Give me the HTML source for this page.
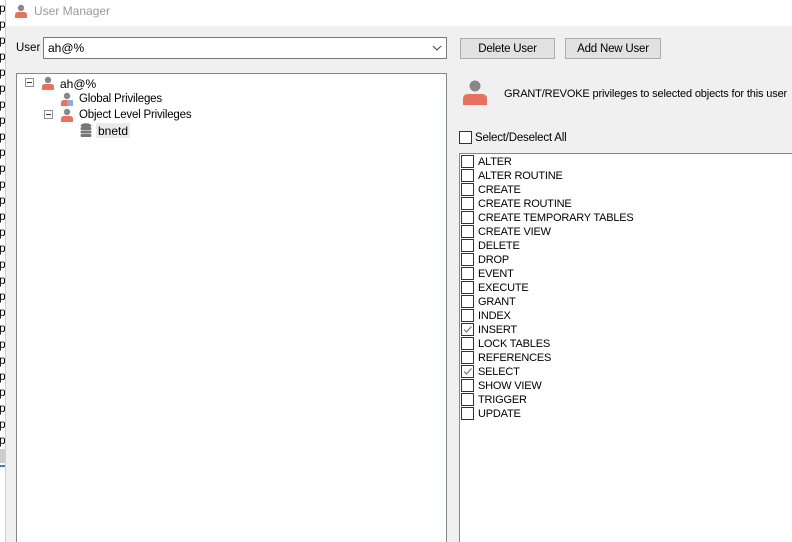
<!DOCTYPE html>
<html style="overflow:hidden;width:792px;height:542px"><head><style>
*{margin:0;padding:0;box-sizing:border-box}
body{width:792px;height:542px;overflow:hidden;background:#fff;font-family:"Liberation Sans",sans-serif;font-size:11px;color:#000;position:relative}
.a{position:absolute}
.cb{position:absolute;left:461px;width:13px;height:13px;border:1px solid #333;background:#fff}
.lb{position:absolute;left:478px;font-size:11px;line-height:14px;letter-spacing:-0.2px}
.btn{position:absolute;top:38px;height:21px;background:#e1e1e1;border:1px solid #adadad;text-align:center;line-height:21px;font-size:11.5px;letter-spacing:-0.2px}
</style></head><body>
<div class="a" style="left:0;top:0;width:6px;height:542px;background:#fff;overflow:hidden">
<div style="font-size:12px;line-height:16px;margin-left:-1px">p<br>p<br>p<br>p<br>p<br>p<br>p<br>p<br>p<br>p<br>p<br>p<br>p<br>p<br>p<br>p<br>p<br>p<br>p<br>p<br>p<br>p<br>p<br>p<br>p<br>p<br>p<br>p</div>
<div style="position:absolute;top:449px;left:0;width:6px;height:14px;background:#ccc"></div>
<div style="position:absolute;top:465px;left:0;width:6px;height:2px;background:#3c7fc6"></div>
</div>
<div class="a" style="left:5px;top:0;width:1px;height:542px;background:#d0d0d0"></div>
<div class="a" style="left:6px;top:0;width:786px;height:26px;background:#fff"></div>
<svg class="a" style="left:14px;top:4px" width="14" height="14" viewBox="0 0 14 14"><circle cx="7" cy="4" r="3.2" fill="#888"/><path d="M1 14 V11 Q1 8 4 8 H10 Q13 8 13 11 V14Z" fill="#e8705f"/></svg>
<div class="a" style="left:34px;top:4px;font-size:12px;color:#999">User Manager</div>
<div class="a" style="left:6px;top:26px;width:786px;height:516px;background:#f0f0f0"></div>
<div class="a" style="left:16px;top:42px;font-size:11.5px">User</div>
<div class="a" style="left:43px;top:37px;width:404px;height:22px;background:#fff;border:1px solid #7a7a7a;padding-left:4px;line-height:20px;font-size:12px">ah@%</div>
<svg class="a" style="left:432px;top:45px" width="10" height="6"><path d="M1 1 L5 5 L9 1" fill="none" stroke="#444"/></svg>
<div class="btn" style="left:460px;width:95px">Delete User</div>
<div class="btn" style="left:565px;width:96px">Add New User</div>
<div class="a" style="left:16px;top:73px;width:431px;height:469px;background:#fff;border:1px solid #828790;border-bottom:none"></div>
<div class="a" style="left:25px;top:78px;width:9px;height:9px;border:1px solid #919191;background:#fff"><div style="position:absolute;left:1px;top:3px;width:5px;height:1px;background:#333"></div></div>
<svg class="a" style="left:41px;top:76px" width="14" height="14" viewBox="0 0 14 14"><circle cx="7" cy="4" r="3.2" fill="#888"/><path d="M1 14 V11 Q1 8 4 8 H10 Q13 8 13 11 V14Z" fill="#e8705f"/></svg>
<div class="a" style="left:60px;top:77px;font-size:12px">ah@%</div>
<svg class="a" style="left:60px;top:92px" width="14" height="14" viewBox="0 0 14 14"><circle cx="7" cy="4" r="3.2" fill="#888"/><path d="M1 14 V11 Q1 8 4 8 H10 Q13 8 13 11 V14Z" fill="#e8705f"/><rect x="7" y="8" width="6" height="6" fill="#98a8d8"/></svg>
<div class="a" style="left:79px;top:93px;font-size:11.5px;letter-spacing:-0.2px">Global Privileges</div>
<div class="a" style="left:44px;top:110px;width:9px;height:9px;border:1px solid #919191;background:#fff"><div style="position:absolute;left:1px;top:3px;width:5px;height:1px;background:#333"></div></div>
<svg class="a" style="left:60px;top:108px" width="14" height="14" viewBox="0 0 14 14"><circle cx="7" cy="4" r="3.2" fill="#888"/><path d="M1 14 V11 Q1 8 4 8 H10 Q13 8 13 11 V14Z" fill="#e8705f"/></svg>
<div class="a" style="left:79px;top:109px;font-size:11.5px;letter-spacing:-0.2px">Object Level Privileges</div>
<svg class="a" style="left:80px;top:123px" width="12" height="14" viewBox="0 0 12 14"><ellipse cx="6" cy="2.5" rx="5.5" ry="2.2" fill="#777"/><rect x="0.5" y="4" width="11" height="3" rx="1.5" fill="#777"/><rect x="0.5" y="7.5" width="11" height="3" rx="1.5" fill="#777"/><rect x="0.5" y="11" width="11" height="3" rx="1.5" fill="#777"/></svg>
<div class="a" style="left:96px;top:123px;width:34px;height:15px;background:#eaeaea"></div>
<div class="a" style="left:98px;top:124px;font-size:12px">bnetd</div>
<svg class="a" style="left:462px;top:79px" width="26" height="26" viewBox="0 0 26 26"><circle cx="13" cy="7" r="5.5" fill="#888"/><path d="M1 26 V20 Q1 15 6 15 H20 Q25 15 25 20 V26Z" fill="#e8705f"/></svg>
<div class="a" style="left:504px;top:88px;font-size:11px;white-space:nowrap;letter-spacing:-0.15px">GRANT/REVOKE privileges to selected objects for this user</div>
<div class="cb" style="left:459px;top:131px"></div>
<div class="a" style="left:475px;top:132px;font-size:11.5px;letter-spacing:-0.2px">Select/Deselect All</div>
<div class="a" style="left:459px;top:153px;width:333px;height:389px;background:#fff;border-left:1px solid #828790;border-top:1px solid #828790"></div>
<div class="cb" style="top:155px"></div><div class="lb" style="top:155px">ALTER</div>
<div class="cb" style="top:169px"></div><div class="lb" style="top:169px">ALTER ROUTINE</div>
<div class="cb" style="top:183px"></div><div class="lb" style="top:183px">CREATE</div>
<div class="cb" style="top:197px"></div><div class="lb" style="top:197px">CREATE ROUTINE</div>
<div class="cb" style="top:211px"></div><div class="lb" style="top:211px">CREATE TEMPORARY TABLES</div>
<div class="cb" style="top:225px"></div><div class="lb" style="top:225px">CREATE VIEW</div>
<div class="cb" style="top:239px"></div><div class="lb" style="top:239px">DELETE</div>
<div class="cb" style="top:253px"></div><div class="lb" style="top:253px">DROP</div>
<div class="cb" style="top:267px"></div><div class="lb" style="top:267px">EVENT</div>
<div class="cb" style="top:281px"></div><div class="lb" style="top:281px">EXECUTE</div>
<div class="cb" style="top:295px"></div><div class="lb" style="top:295px">GRANT</div>
<div class="cb" style="top:309px"></div><div class="lb" style="top:309px">INDEX</div>
<div class="cb" style="top:323px"><svg width="11" height="11" style="position:absolute;left:0;top:0"><path d="M2 5.5 L4.5 8 L9.5 2.5" fill="none" stroke="#777" stroke-width="1.2"/></svg></div><div class="lb" style="top:323px">INSERT</div>
<div class="cb" style="top:337px"></div><div class="lb" style="top:337px">LOCK TABLES</div>
<div class="cb" style="top:351px"></div><div class="lb" style="top:351px">REFERENCES</div>
<div class="cb" style="top:365px"><svg width="11" height="11" style="position:absolute;left:0;top:0"><path d="M2 5.5 L4.5 8 L9.5 2.5" fill="none" stroke="#777" stroke-width="1.2"/></svg></div><div class="lb" style="top:365px">SELECT</div>
<div class="cb" style="top:379px"></div><div class="lb" style="top:379px">SHOW VIEW</div>
<div class="cb" style="top:393px"></div><div class="lb" style="top:393px">TRIGGER</div>
<div class="cb" style="top:407px"></div><div class="lb" style="top:407px">UPDATE</div>
</body></html>
